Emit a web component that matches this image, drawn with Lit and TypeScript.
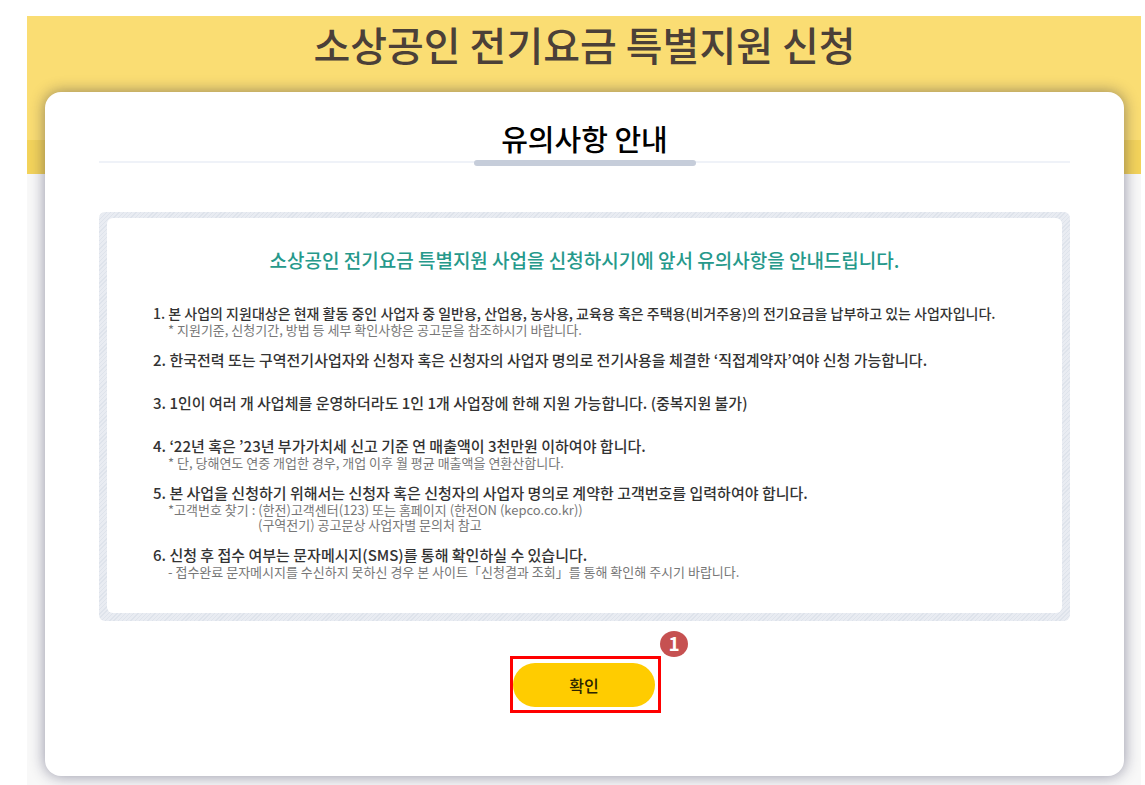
import { LitElement, html, css } from "lit";
import { customElement } from "lit/decorators.js";

interface Notice {
  text: string;
  compact?: boolean;
  notes?: { text: string; indent?: boolean }[];
}

const NOTICES: Notice[] = [
  {
    text: "1. 본 사업의 지원대상은 현재 활동 중인 사업자 중 일반용, 산업용, 농사용, 교육용 혹은 주택용(비거주용)의 전기요금을 납부하고 있는 사업자입니다.",
    compact: true,
    notes: [{ text: "* 지원기준, 신청기간, 방법 등 세부 확인사항은 공고문을 참조하시기 바랍니다." }],
  },
  {
    text: "2. 한국전력 또는 구역전기사업자와 신청자 혹은 신청자의 사업자 명의로 전기사용을 체결한 ‘직접계약자’여야 신청 가능합니다.",
  },
  {
    text: "3. 1인이 여러 개 사업체를 운영하더라도 1인 1개 사업장에 한해 지원 가능합니다. (중복지원 불가)",
  },
  {
    text: "4. ‘22년 혹은 ’23년 부가가치세 신고 기준 연 매출액이 3천만원 이하여야 합니다.",
    notes: [{ text: "* 단, 당해연도 연중 개업한 경우, 개업 이후 월 평균 매출액을 연환산합니다." }],
  },
  {
    text: "5. 본 사업을 신청하기 위해서는 신청자 혹은 신청자의 사업자 명의로 계약한 고객번호를 입력하여야 합니다.",
    notes: [
      { text: "*고객번호 찾기 : (한전)고객센터(123) 또는 홈페이지 (한전ON (kepco.co.kr))" },
      { text: "(구역전기) 공고문상 사업자별 문의처 참고", indent: true },
    ],
  },
  {
    text: "6. 신청 후 접수 여부는 문자메시지(SMS)를 통해 확인하실 수 있습니다.",
    notes: [
      { text: "- 접수완료 문자메시지를 수신하지 못하신 경우 본 사이트「신청결과 조회」를 통해 확인해 주시기 바랍니다." },
    ],
  },
];

@customElement("app-root")
export class AppRoot extends LitElement {
  static styles = css`
    :host {
      display: block;
      box-sizing: border-box;
      min-height: 100vh;
      padding: 16px 4px 0 27px;
      background: #fff;
      font-family: "Noto Sans CJK KR", "Noto Sans", sans-serif;
    }
    * {
      box-sizing: border-box;
      margin: 0;
      padding: 0;
    }
    .page {
      padding: 0 17px 9px 18px;
      background: linear-gradient(
        #fadd73 0 124px,
        #f3d35b 124px 158px,
        #f8f8f8 158px
      );
      overflow: hidden;
    }
    .title {
      padding-bottom: 20px;
      font-size: 40px;
      line-height: 56px;
      font-weight: 500;
      color: #4b4038;
      text-align: center;
      white-space: nowrap;
    }
    .card {
      padding: 24px 54px 63px;
      border-radius: 16px;
      background: #fff;
      box-shadow: 0 0 15px rgba(20, 20, 60, 0.45);
    }
    .heading {
      display: flex;
      flex-direction: column;
      align-items: center;
      font-size: 29px;
      line-height: 44px;
      font-weight: 500;
      color: #000;
      background: linear-gradient(#eff2f8, #eff2f8) 0 45px / 100% 2px no-repeat;
    }
    .heading::after {
      content: "";
      width: 222px;
      height: 6px;
      border-radius: 3px;
      background: #c6cdda;
    }
    .frame {
      margin-top: 46px;
      padding: 6px 8px 8px;
      border-radius: 6px;
      background: repeating-linear-gradient(
        135deg,
        #e9ecf2 0 2px,
        #dee3eb 2px 3px
      );
    }
    .panel {
      padding: 28px 46px 34px;
      border-radius: 6px;
      background: #fff;
    }
    .intro {
      font-size: 19px;
      line-height: 28px;
      font-weight: 500;
      color: #26998b;
      text-align: center;
    }
    .list {
      display: flex;
      flex-direction: column;
      gap: 14px;
      margin-top: 30px;
      list-style: none;
    }
    .item {
      min-height: 29px;
      font-size: 15px;
      line-height: 18px;
      color: #333;
      white-space: nowrap;
    }
    .lead {
      font-weight: 500;
    }
    .compact {
      font-size: 14px;
    }
    .note {
      padding-left: 15px;
      font-size: 13px;
      line-height: 15px;
      color: #777;
    }
    .indent {
      padding-left: 105px;
    }
    .actions {
      display: flex;
      justify-content: center;
      padding: 35px 0 0 2px;
    }
    .mark {
      position: relative;
      padding: 4px 3px 3px 0;
      border: 3px solid #f00;
    }
    .confirm {
      display: block;
      width: 142px;
      height: 44px;
      border: 0;
      border-radius: 22px;
      background: #fc0;
      font: 500 16px/24px "Noto Sans CJK KR", sans-serif;
      color: #2b2300;
      cursor: pointer;
    }
    .badge {
      position: absolute;
      right: -30px;
      top: -28px;
      width: 28px;
      height: 26px;
      border-radius: 50%;
      background: #c65151;
      font-size: 19px;
      line-height: 24px;
      font-weight: 700;
      color: #fff;
      text-align: center;
    }
  `;

  render() {
    return html`
      <div class="page">
        <h1 class="title">소상공인 전기요금 특별지원 신청</h1>
        <main class="card">
          <h2 class="heading">유의사항 안내</h2>
          <section class="frame">
            <div class="panel">
              <p class="intro">
                소상공인 전기요금 특별지원 사업을 신청하시기에 앞서 유의사항을 안내드립니다.
              </p>
              <ol class="list">
                ${NOTICES.map(
                  (n) => html`<li class="item">
                    <p class="lead ${n.compact ? "compact" : ""}">${n.text}</p>
                    ${(n.notes ?? []).map(
                      (s) => html`<p class="note ${s.indent ? "indent" : ""}">${s.text}</p>`
                    )}
                  </li>`
                )}
              </ol>
            </div>
          </section>
          <div class="actions">
            <div class="mark">
              <button class="confirm" type="button">확인</button>
              <span class="badge">1</span>
            </div>
          </div>
        </main>
      </div>
    `;
  }
}
